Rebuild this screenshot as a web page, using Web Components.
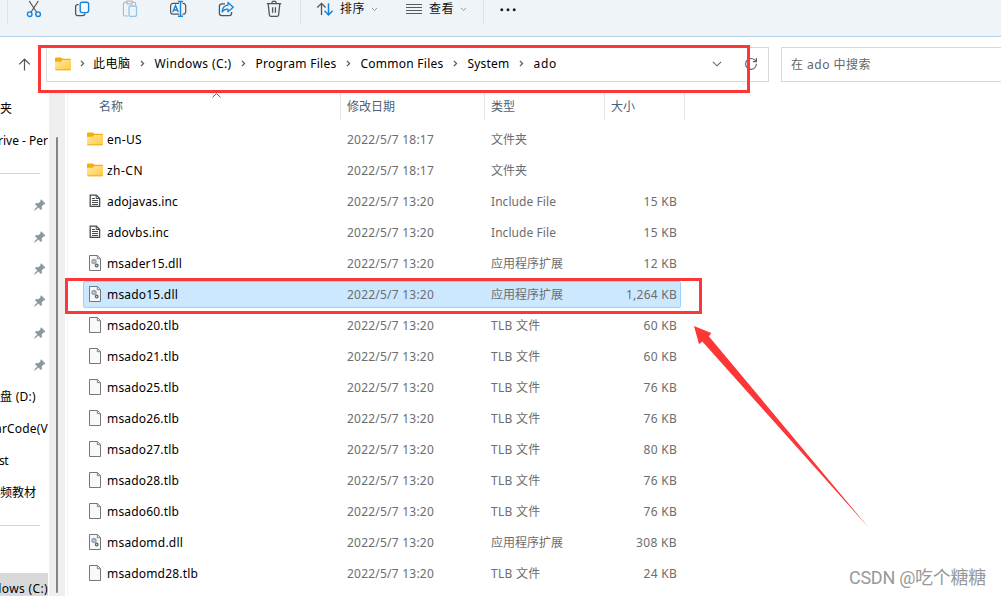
<!DOCTYPE html>
<html lang="zh-CN">
<head>
<meta charset="utf-8">
<title>ado</title>
<style>
html,body{margin:0;height:100%;overflow:hidden;background:#fff}
body{font:12px/16px "Noto Sans","Noto Sans CJK SC",sans-serif;color:#000}
</style>
</head>
<body>
<file-explorer></file-explorer>
<script>
const define = (name, css, html, setup) => {
  const t = document.createElement('template');
  t.innerHTML = `<style>${css}</style>${html}`;
  customElements.define(name, class extends HTMLElement {
    constructor() {
      super();
      this.attachShadow({mode: 'open'}).append(t.content.cloneNode(true));
    }
    connectedCallback() { if (setup) setup(this, this.shadowRoot); }
  });
};

/* A label whose tracking is adjusted so that it fills the width in its "w" attribute. */
define('fit-text', `:host{display:inline-block;white-space:pre;flex:none;justify-self:start}`, `<slot></slot>`, el => {
  const w = parseFloat(el.getAttribute('w'));
  if (!w) return;
  const n = [...el.textContent].length;
  const natural = el.getBoundingClientRect().width;
  if (natural) el.style.letterSpacing = ((w - natural) / n).toFixed(3) + 'px';
});

const icons = {
  cut: [16,18,`<g fill="none" stroke-width="1.2"><path stroke="#555" d="M3.2 1 10.8 12.5M12.3 1 4.8 12.5"/><g stroke="#1683d8" stroke-width="1.4"><circle cx="3.7" cy="14.2" r="2.3"/><circle cx="12.1" cy="14.2" r="2.3"/></g></g>`],
  copy: [16,18,`<g fill="none" stroke-width="1.3"><path stroke="#555" d="M4.6 4.6H3.6a2 2 0 0 0-2 2v6.8a2.2 2.2 0 0 0 2.2 2.2h5a2 2 0 0 0 2-2"/><rect x="6.2" y="2.2" width="8.4" height="10.4" rx="2" stroke="#1683d8" stroke-width="1.4" fill="#f4faff"/></g>`],
  paste: [16,18,`<g fill="none" stroke-width="1.2"><path stroke="#b5b9bc" d="M6 16H3a1.6 1.6 0 0 1-1.6-1.6V4A1.6 1.6 0 0 1 3 2.4h1.8M10 2.4h2A1.6 1.6 0 0 1 13.6 4v1.2M5 1.2h5v2.6H5z"/><rect x="7" y="6" width="7.5" height="10.3" rx="1.3" stroke="#8ec5ea" stroke-width="1.3"/></g>`],
  rename: [17,18,`<g fill="none" stroke-width="1.2"><path stroke="#555" d="M9 3.4H3a2.4 2.4 0 0 0-2.4 2.4v6A2.4 2.4 0 0 0 3 14.2h6M12.5 3.4h.8a2.4 2.4 0 0 1 2.4 2.4v6a2.4 2.4 0 0 1-2.4 2.4h-.8"/><path stroke="#1683d8" stroke-width="1.4" d="M10.5 1.5v15M8 1.5h5M8 16.3h5M2.8 12 5.5 5.5 8.2 12M3.8 10h3.5"/></g>`],
  share: [17,18,`<g fill="none" stroke-width="1.3" stroke-linejoin="round"><path stroke="#555" d="M7 3.8H3.8a2.4 2.4 0 0 0-2.4 2.4v7a2.4 2.4 0 0 0 2.4 2.4h7.4a2.4 2.4 0 0 0 2.4-2.4V12"/><path stroke="#1683d8" stroke-width="1.3" d="M10 2.4 15.2 7.2 10 11.8V9.2C7.5 9 5.7 9.8 4.2 12 4.4 8 6.6 5.5 10 5.2z"/></g>`],
  trash: [16,18,`<g fill="none" stroke="#555" stroke-width="1.3"><path d="M.8 3.6h14.4M5.8 3.2c0-2.7 4.4-2.7 4.4 0M2.2 4l1.2 11a1.6 1.6 0 0 0 1.6 1.4h6a1.6 1.6 0 0 0 1.6-1.4l1.2-11M6.6 7.2v5.6M9.4 7.2v5.6"/></g>`],
  sort: [17,18,`<g fill="none" stroke-width="1.3"><path stroke="#555" d="M5.5 15V3.3M1.3 7.5l4.2-4.2 4.1 4.2"/><path stroke="#1683d8" stroke-width="1.5" d="M12.5 3.3V15M8.5 10.8l4 4.1 4.2-4.1"/></g>`],
  view: [16,18,`<path stroke="#5a5a5a" d="M0 4.5h16M0 7.5h16M0 10.5h16M0 13.5h16"/>`],
  drop: [7,5,`<path fill="none" stroke="#999" d="m.8.8 2.7 2.7L6.2.8"/>`],
  more: [18,4,`<g fill="#222"><circle cx="1.8" cy="1.7" r="1.5"/><circle cx="8" cy="1.7" r="1.5"/><circle cx="14.2" cy="1.7" r="1.5"/></g>`],
  up: [13,13,`<path fill="none" stroke="#555" stroke-width="1.2" d="M6.5 12.5V1.3M1.2 6.4l5.3-5.2 5.3 5.2"/>`],
  chev: [5,7,`<path fill="none" stroke="#555" stroke-width="1.2" d="m.9.8 2.7 2.7L.9 6.2"/>`],
  down: [10,6,`<path fill="none" stroke="#666" stroke-width="1.1" d="m.9.8 4.1 4 4.1-4"/>`],
  asc: [9,5,`<path fill="none" stroke="#666" d="M.5 4.3 4.5.7l4 3.6"/>`],
  reload: [14,14,`<path fill="none" stroke="#666" stroke-width="1.2" d="M12.4 6.8a5.4 5.4 0 1 1-1.8-3.9l1.6 1.5M12.4 1v3.6H8.8"/>`],
  folder: [16,14,`<defs><linearGradient id="g" x1="0" y1="0" x2="1" y2="1"><stop offset="0" stop-color="#ffe8a4"/><stop offset="1" stop-color="#ffca3e"/></linearGradient></defs><path fill="#f5ad0b" d="M0 1.7A1.2 1.2 0 0 1 1.2.5h4.6L7.6 1.7h7.2A1.2 1.2 0 0 1 16 2.9V6H0z"/><path fill="url(#g)" d="M0 4.8h5.6L7.4 3H16v9.300a1 1 0 0 1-1 1H1a1 1 0 0 1-1-1z"/><path stroke="#eaae2c" d="M.5 12.800h15"/>`],
  text: [12,14,`<path fill="#fff" stroke="#4a4a4c" stroke-width="1.3" d="M1.2 1.2h6.2l3.2 3.2v8H1.2z"/><path fill="none" stroke="#4a4a4c" d="M7.2 1.2v3.3h3.3M3 4.5h3M3 6.5h6M3 8.5h6M3 10.5h6"/>`],
  page: [12,16,`<path fill="#f9f9fa" stroke="#77777a" d="M.5.5h8l3 3v12H.5z"/><path fill="#e8e8e8" stroke="#77777a" stroke-width=".9" d="M8.3.7v3h3"/>`],
  dll: [12,16,`<path fill="#f9f9fa" stroke="#77777a" d="M.5.5h8l3 3v12H.5z"/><path fill="#e8e8e8" stroke="#77777a" stroke-width=".9" d="M8.3.7v3h3"/><circle cx="5" cy="6.6" r="1.8" fill="#cfd7de" stroke="#9da9b5" stroke-width="1.9"/><circle cx="7.7" cy="10.6" r="1.3" fill="#fff" stroke="#5f6d79" stroke-width="1.4"/>`],
  pin: [12,12,`<path fill="#8b979f" d="M7.1.3 11.4 4.600l-1 .8-.7-.1-2 2.2.2 2.7-1.100.8-2.400-2.400L1 11.5l-.7-.1.1-.8 3-3L1 5.200l.8-1.100 2.700.2 2.100-2.100-.2-1z"/>`]
};
define('ex-icon', `:host{display:block;flex:none;line-height:0}svg{display:block;overflow:visible}`, `<span></span>`, (el, r) => {
  const [w, h, body] = icons[el.getAttribute('name')];
  r.querySelector('span').innerHTML = `<svg width="${w}" height="${h}" viewBox="0 0 ${w} ${h}">${body}</svg>`;
});

define('ex-toolbar', `
:host{display:block;height:36px;background:#eff4f9;border-bottom:1px solid #b6cfe2;flex:none}
.bar{display:grid;height:24px;grid-template-columns:26px 48px 48px 48px 48px 48px 34px 16px 24px 31px 35px 23px 31px 23px 17px 30px;align-items:start}
i{width:1px;height:24px;background:#dde3e8;justify-self:start}
i.a{margin-left:7px}
.t{line-height:18px;color:#111}
.d{margin-top:7px}.m{margin-top:8px}`,
`<div class="bar"><i class="a"></i><ex-icon name="cut"></ex-icon><ex-icon name="copy"></ex-icon><ex-icon name="paste"></ex-icon><ex-icon name="rename"></ex-icon><ex-icon name="share"></ex-icon><ex-icon name="trash"></ex-icon><i></i><ex-icon name="sort"></ex-icon><fit-text class="t" w="25">排序</fit-text><ex-icon class="d" name="drop"></ex-icon><ex-icon name="view"></ex-icon><fit-text class="t" w="25">查看</fit-text><ex-icon class="d" name="drop"></ex-icon><i></i><ex-icon class="m" name="more"></ex-icon></div>`);

define('ex-address', `
:host{display:flex;height:56px;flex:none;box-sizing:border-box;padding:10px 0 11px 18px}
.up{flex:none;width:28px;padding-top:11px;box-sizing:border-box}
.box{flex:none;border:1px solid #d9d9d9;box-sizing:border-box;height:35px;display:flex;align-items:center}
.path{width:723px;padding:0 10px 2px 8px}
.s{width:24px;display:flex;justify-content:center}
.grow{flex:1}
.find{margin-left:12px;width:240px;padding-left:9px;color:#666}
.r{margin-left:22px}`,
`<div class="up"><ex-icon name="up"></ex-icon></div>
<div class="box path"><ex-icon name="folder"></ex-icon><span class="s" style="width:22px"><ex-icon name="chev"></ex-icon></span><fit-text w="37.5">此电脑</fit-text><span class="s"><ex-icon name="chev"></ex-icon></span><fit-text w="77">Windows (C:)</fit-text><span class="s"><ex-icon name="chev"></ex-icon></span><fit-text w="81">Program Files</fit-text><span class="s"><ex-icon name="chev"></ex-icon></span><fit-text w="83">Common Files</fit-text><span class="s"><ex-icon name="chev"></ex-icon></span><fit-text w="42">System</fit-text><span class="s"><ex-icon name="chev"></ex-icon></span><fit-text w="23.5">ado</fit-text><span class="grow"></span><ex-icon name="down"></ex-icon><ex-icon class="r" name="reload"></ex-icon></div>
<div class="box find"><fit-text w="80">在 ado 中搜索</fit-text></div>`);

define('ex-side-item', `
:host{display:flex;height:32px;width:48px;flex:none;align-items:center;justify-content:flex-end;overflow:hidden;box-sizing:border-box}
:host([line])::before{content:"";width:40px;height:1px;background:#d5d5d5;margin-right:8px}
:host([active]){background:#d9d9d9}`, `<slot></slot>`);

define('ex-sidebar', `
:host{display:flex;width:65px;flex:none;height:100%}
.list{width:49px;overflow:hidden;height:100%}
.scroll{width:16px;background:#efefef;padding:44px 0 3px;box-sizing:border-box;display:flex;justify-content:center}
.scroll::before{content:"";width:2px;background:#858585;border-radius:1px}
ex-icon{margin-right:2px}`,
`<div class="list">
<ex-side-item style="padding-right:36px"><fit-text w="12">夹</fit-text></ex-side-item>
<ex-side-item><fit-text w="50">rive - Per</fit-text></ex-side-item>
<ex-side-item line></ex-side-item>
${'<ex-side-item><ex-icon name="pin"></ex-icon></ex-side-item>'.repeat(6)}
<ex-side-item style="padding-right:12px"><fit-text w="36">盘 (D:)</fit-text></ex-side-item>
<ex-side-item><fit-text w="53">arCode(V</fit-text></ex-side-item>
<ex-side-item style="padding-right:40px"><fit-text w="9">st</fit-text></ex-side-item>
<ex-side-item style="padding-right:12px"><fit-text w="48">视频教材</fit-text></ex-side-item>
<ex-side-item line></ex-side-item>
<ex-side-item active style="margin-top:32px"><fit-text w="54">dows (C:)</fit-text></ex-side-item>
</div><div class="scroll"></div>`);

define('ex-head', `
:host{display:grid;grid-template-columns:257px 144px 120px 80px;height:27px;color:#4c607a;position:relative;margin-left:16px}
div{border-right:1px solid #e2e2e2;box-sizing:border-box;padding:6px 0 0 6px}
div.first{padding-left:15px}
.asc{position:absolute;left:128px;top:0}`,
`<div class="first"><fit-text w="24">名称</fit-text></div><div><fit-text w="48">修改日期</fit-text></div><div><fit-text w="24">类型</fit-text></div><div><fit-text w="24">大小</fit-text></div><ex-icon class="asc" name="asc"></ex-icon>`);

define('ex-row', `
:host{display:grid;grid-template-columns:23px 240px 144px 113px 73px;width:598px;height:27px;box-sizing:border-box;margin:2px 0;border:1px solid transparent;align-items:center;color:#6d6d6d}
:host([selected]){background:#cce8ff;border-color:#99d1ff;border-radius:2px}
.ic{display:flex;justify-content:center;padding:0 1px 1px 0}
.n{color:#000}.k{justify-self:end}`,
`<span class="ic"></span><span class="n"></span><span class="m"></span><span class="y"></span><span class="k"></span>`,
(el, r) => {
  const put = (sel, text, w) => { if (text) r.querySelector(sel).innerHTML = `<fit-text w="${w}">${text}</fit-text>`; };
  const [icon, name, nw, date, kind, kw, size, sw] = el.getAttribute('data').split('|');
  r.querySelector('.ic').innerHTML = `<ex-icon name="${icon}"></ex-icon>`;
  put('.n', name, nw); put('.m', date, 87); put('.y', kind, kw); put('.k', size, sw);
});

const d1 = '2022/5/7 18:17', d2 = '2022/5/7 13:20';
const inc = 'Include File|65', dll = '应用程序扩展|72', tlb = 'TLB 文件|49.5';
const files = [
  `folder|en-US|35|${d1}|文件夹|36`, `folder|zh-CN|36|${d1}|文件夹|36`,
  `text|adojavas.inc|71|${d2}|${inc}|15 KB|33.5`, `text|adovbs.inc|62|${d2}|${inc}|15 KB|33.5`,
  `dll|msader15.dll|75|${d2}|${dll}|12 KB|33.5`, `dll|msado15.dll|71|${d2}|${dll}|1,264 KB|51`,
  `page|msado20.tlb|72|${d2}|${tlb}|60 KB|33.5`, `page|msado21.tlb|72|${d2}|${tlb}|60 KB|33.5`,
  `page|msado25.tlb|72|${d2}|${tlb}|76 KB|33.5`, `page|msado26.tlb|72|${d2}|${tlb}|76 KB|33.5`,
  `page|msado27.tlb|72|${d2}|${tlb}|80 KB|33.5`, `page|msado28.tlb|72|${d2}|${tlb}|76 KB|33.5`,
  `page|msado60.tlb|72|${d2}|${tlb}|76 KB|33.5`, `dll|msadomd.dll|76|${d2}|${dll}|308 KB|41`,
  `page|msadomd28.tlb|91|${d2}|${tlb}|24 KB|33.5`];

define('ex-list', `
:host{display:block;flex:1;height:100%;margin-left:2px;border-left:1px solid #f4f4f4;box-sizing:border-box}
ex-head .first{padding-left:15px}
.rows{padding:4px 0 0 15px;display:flex;flex-direction:column}`,
`<ex-head></ex-head><div class="rows">${files.map((f, i) => `<ex-row data="${f}"${i === 5 ? ' selected' : ''}></ex-row>`).join('')}</div>`);

/* Red marks and the signature lie over the window. */
define('ex-marks', `
:host{position:absolute;inset:0;pointer-events:none}
svg{display:block}
fit-text{position:absolute;left:849px;top:567px;font-family:Roboto,"Noto Sans CJK SC",sans-serif;font-size:18px;line-height:22px;color:#999}`,
`<svg width="1001" height="596"><g fill="none" stroke="#fc3737" stroke-width="3"><rect x="39.5" y="46.5" width="709" height="45"/><rect x="66.5" y="279.5" width="634" height="33"/></g><path fill="#fc3737" d="M694 326 711.200 333 709 336.500 869 528 702.300 341.500 699 344.200z"/></svg><fit-text w="137">CSDN @吃个糖糖</fit-text>`);

define('file-explorer', `
:host{display:flex;flex-direction:column;width:1001px;height:596px;overflow:hidden;position:relative}
main{display:flex;height:503px}`,
`<ex-toolbar></ex-toolbar><ex-address></ex-address><main><ex-sidebar></ex-sidebar><ex-list></ex-list></main><ex-marks></ex-marks>`);
</script>
</body>
</html>
